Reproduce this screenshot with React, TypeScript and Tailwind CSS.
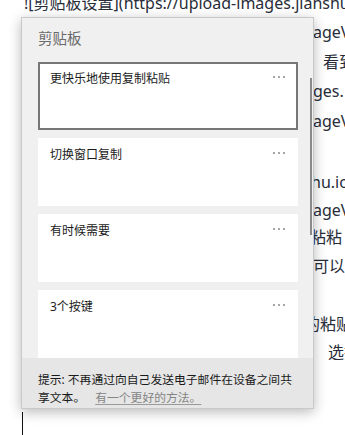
import React from 'react';

const FONT = { fontFamily: '"Noto Sans", "Noto Sans CJK SC", sans-serif' };

// editor lines behind the popup; the leading part sits under the panel
const LINES = [
  { h: 'h-[29px]', pre: 'w-[0px]', hidden: '', text: '![剪贴板设置](https://upload-images.jianshu.io/upload_images/clipboard.png)' },
  { h: 'h-[30px]', pre: 'w-[289px]', hidden: '(https://upload-images.jianshu.io/im', text: 'ageV' },
  { h: 'h-[29px]', pre: 'w-[299px]', hidden: '打开设置之后，你就可以', text: '看到' },
  { h: 'h-[30px]', pre: 'w-[289px]', hidden: '![切换](https://upload-ima', text: 'ges.' },
  { h: 'h-[30px]', pre: 'w-[289px]', hidden: '(https://upload-images.jianshu.io/im', text: 'ageV' },
  { h: 'h-[31px]', pre: 'w-[0px]', hidden: '', text: '' },
  { h: 'h-[29px]', pre: 'w-[287px]', hidden: '![按键](https://upload.jians', text: 'hu.io' },
  { h: 'h-[27px]', pre: 'w-[289px]', hidden: '(https://upload-images.jianshu.io/im', text: 'ageV' },
  { h: 'h-[28px]', pre: 'w-[286px]', hidden: '使用 Win + V 就能打开剪贴板', text: '粘粘' },
  { h: 'h-[29px]', pre: 'w-[289px]', hidden: '在历史记录里选中任意一条', text: '可以' },
  { h: 'h-[30px]', pre: 'w-[0px]', hidden: '', text: '' },
  { h: 'h-[28px]', pre: 'w-[280px]', hidden: '点击右上角的三个点固定常用', text: '的粘贴' },
  { h: 'h-[28px]', pre: 'w-[304px]', hidden: '也可以删除不需要的条目，', text: '选择' },
];

const CARDS = [
  { text: '更快乐地使用复制粘贴', selected: true },
  { text: '切换窗口复制', selected: false },
  { text: '有时候需要', selected: false },
  { text: '3个按键', selected: false },
];

function Dots() {
  return (
    <div className="flex gap-[3px] mt-[5px]">
      <span className="w-[2px] h-[2px] bg-[#a6a6a6]" />
      <span className="w-[2px] h-[2px] bg-[#a6a6a6]" />
      <span className="w-[2px] h-[2px] bg-[#a6a6a6]" />
    </div>
  );
}

export default function App() {
  return (
    <div className="relative w-[345px] h-[435px] overflow-hidden bg-white" style={FONT}>
      {/* Editor text */}
      <div className="-mt-[12px] pl-[24px] text-[16px] text-[#282d39] whitespace-nowrap">
        {LINES.map((l, i) => (
          <div key={i} className={`${l.h} flex items-center`}>
            <span className={`${l.pre} overflow-hidden shrink-0`}>{l.hidden}</span>
            <span>{l.text}</span>
          </div>
        ))}
      </div>
      <span className="absolute left-[22px] top-[412px] w-px h-[23px] bg-[#111]" />

      {/* Clipboard popup */}
      <div className="absolute left-[21px] top-[17px] w-[293px] h-[392px] flex flex-col bg-[#f0f0f0] border border-[#c9c9c9] shadow-[0_3px_12px_rgba(0,0,0,0.28)]">
        <div className="px-[16px] pt-[10px] h-[44px] text-[14.5px] leading-[20px] text-[#6a6a6a]">剪贴板</div>
        <div className="flex-1 flex flex-col gap-[8px] px-[16px] overflow-hidden">
          {CARDS.map((c) => (
            <div
              key={c.text}
              className={`shrink-0 h-[68px] w-[260px] bg-white border-2 pl-[10px] pr-[11px] pt-[7px] ${c.selected ? 'border-[#777777]' : 'border-white'}`}
            >
              <div className="flex items-start justify-between">
                <span className="text-[12px] leading-[16px] text-[#1b1b1b]">{c.text}</span>
                <Dots />
              </div>
            </div>
          ))}
        </div>
        <div className="h-[50px] shrink-0 bg-[#e6e6e6] px-[16px] pt-[13px] text-[11.8px] leading-[17.5px] text-[#1a1a1a] whitespace-nowrap">
          <div>提示: 不再通过向自己发送电子邮件在设备之间共</div>
          <div>
            享文本。
            <span className="ml-[10px] text-[#858585] underline decoration-[#9a9a9a] underline-offset-2">有一个更好的方法。</span>
          </div>
        </div>
        <span className="absolute left-[288px] top-[60px] w-[2px] h-[157px] bg-[#8a8a8a]" />
      </div>
    </div>
  );
}
